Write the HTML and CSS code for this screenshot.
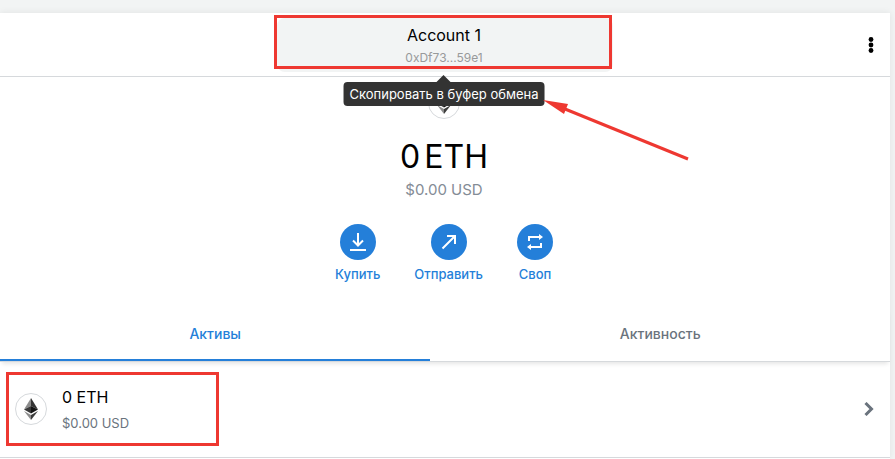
FILE: index.html
```html
<!DOCTYPE html>
<html lang="ru">

<head>
    <meta charset="UTF-8">
    <meta name="viewport" content="width=device-width, initial-scale=1.0">
    <title>Account 1</title>
    <link rel="stylesheet" href="styles.css">
</head>

<body>
    <svg class="symbols" aria-hidden="true">
        <symbol id="eth" viewBox="0 0 14 22">
            <path fill="#343434" d="M7 0v8L14 11.5z" />
            <path fill="#8c8c8c" d="M7 0v8L0 11.5z" />
            <path fill="#141414" d="M7 8v7.6l7-4.1z" />
            <path fill="#393939" d="M7 8v7.6l-7-4.1z" />
            <path fill="#3c3c3b" d="M7 17v5l7-9z" />
            <path fill="#8c8c8c" d="M7 17v5L0 13z" />
        </symbol>
    </svg>

    <main class="wallet">
        <header class="menu-bar">
            <div class="account-wrap">
                <button type="button" class="account" aria-describedby="copy-tip">
                    <span class="account-name">Account 1</span>
                    <span class="account-address">0xDf73...59e1</span>
                </button>
                <div class="tooltip" id="copy-tip" role="tooltip">Скопировать в буфер обмена</div>
                <div class="mark mark-account"></div>
                <svg class="mark-arrow" width="150" height="66" viewBox="0 0 150 66" aria-hidden="true">
                    <path d="M22 9l123 50" stroke="#ee3831" stroke-width="3" />
                    <path fill="#ee3831" d="M0 0l25 4-4 10z" />
                </svg>
            </div>
            <button type="button" class="options" aria-label="Параметры счета">
                <svg width="6" height="16" viewBox="0 0 6 16">
                    <circle cx="3" cy="2.5" r="2.4" />
                    <circle cx="3" cy="8" r="2.4" />
                    <circle cx="3" cy="13.5" r="2.4" />
                </svg>
            </button>
        </header>

        <section class="overview">
            <div class="token-icon"><svg width="14" height="22"><use href="#eth" /></svg></div>
            <h1 class="balance"><span>0</span> <span>ETH</span></h1>
            <p class="balance-fiat">$0.00 USD</p>
            <div class="actions">
                <button type="button" class="action">
                    <span class="action-circle">
                        <svg width="18" height="20" viewBox="0 0 18 20" fill="none" stroke="#fff" stroke-width="2">
                            <path d="M9 1v12M4 8.5l5 5 5-5M1 18h16" />
                        </svg>
                    </span>
                    Купить
                </button>
                <button type="button" class="action">
                    <span class="action-circle">
                        <svg width="16" height="16" viewBox="0 0 16 16" fill="none" stroke="#fff" stroke-width="2">
                            <path d="M1.5 14.5L14 2M6 2h8v8" />
                        </svg>
                    </span>
                    Отправить
                </button>
                <button type="button" class="action">
                    <span class="action-circle">
                        <svg width="18" height="18" viewBox="0 0 18 18">
                            <path fill="none" stroke="#fff" stroke-width="2" d="M3 8V4h11M15 10v4H4" />
                            <path fill="#fff" d="M13 1l4 3-4 3zM5 11l-4 3 4 3z" />
                        </svg>
                    </span>
                    Своп
                </button>
            </div>
        </section>

        <nav class="tabs">
            <button type="button" class="tab active">Активы</button>
            <button type="button" class="tab">Активность</button>
        </nav>

        <a href="#eth-asset" class="asset" id="eth-asset">
            <span class="token-icon"><svg width="14" height="22"><use href="#eth" /></svg></span>
            <span class="asset-text">
                <span class="asset-amount">0 ETH</span>
                <span class="asset-fiat">$0.00 USD</span>
            </span>
            <svg class="chevron" width="10" height="14" viewBox="0 0 10 14" fill="none" stroke="#6a737d" stroke-width="3">
                <path d="M1.5 1l6 6-6 6" />
            </svg>
            <span class="mark mark-asset"></span>
        </a>
    </main>
</body>

</html>
```

FILE: styles.css
```css
* {
    margin: 0;
    padding: 0;
    box-sizing: border-box;
}

:root {
    --blue: #247fd9;
    --grey: #6a737d;
    --line: #d6d9dc;
    --mark: #ee3831;
}

body {
    background: #f2f4f4;
    font-family: Inter, "Noto Sans", sans-serif;
    font-size: 13px;
    line-height: 18px;
    color: #000;
    padding: 13px 5px 0 0;
    overflow: hidden;
}

button {
    border: none;
    background: none;
    font: inherit;
    color: inherit;
    cursor: pointer;
}

.symbols {
    display: none;
}

.wallet {
    background: #fff;
    min-height: calc(100vh - 13px);
    box-shadow: 0 0 7px rgba(0, 0, 0, 0.08);
}

.menu-bar {
    display: grid;
    grid-template-columns: 1fr minmax(0, 336px) 1fr;
    align-items: center;
    height: 64px;
    border-bottom: 1px solid var(--line);
}

.account-wrap {
    position: relative;
    grid-column: 2;
}

.account {
    display: flex;
    flex-direction: column;
    align-items: center;
    gap: 4px;
    width: 100%;
    padding: 7px 10px 5px 8px;
    border-radius: 8px;
    background: #f2f4f4;
}

.account-name {
    font-size: 16px;
    line-height: 20px;
}

.account-address {
    font-size: 12px;
    color: #989a9b;
}

.tooltip {
    position: absolute;
    top: 100%;
    left: 50%;
    transform: translateX(-50%);
    margin: 10px 0 0 -1px;
    padding: 3px 6px;
    border-radius: 4px;
    background: #333;
    color: #fff;
    white-space: nowrap;
    z-index: 1;
}

.tooltip::before {
    content: "";
    position: absolute;
    bottom: 100%;
    left: 50%;
    margin-left: -7px;
    border: 7px solid transparent;
    border-top: none;
    border-bottom-color: #333;
}

.mark {
    position: absolute;
    border: 3px solid var(--mark);
    pointer-events: none;
}

.mark-account {
    inset: -3px 1px 3px -3px;
}

.mark-arrow {
    position: absolute;
    top: 82px;
    left: 266px;
    z-index: 2;
    fill: none;
}

.options {
    justify-self: end;
    display: flex;
    padding: 8px 16px;
}

.overview {
    display: flex;
    flex-direction: column;
    align-items: center;
    padding: 10px 18px 24px 16px;
}

.token-icon {
    display: flex;
    align-items: center;
    justify-content: center;
    flex: none;
    width: 32px;
    height: 32px;
    border: 1px solid var(--line);
    border-radius: 50%;
    background: #fff;
}

.balance {
    display: flex;
    gap: 4px;
    margin-top: 16px;
    font-size: 32px;
    font-weight: 400;
    line-height: 44px;
}

.balance-fiat {
    font-size: 15px;
    line-height: 22px;
    color: #848c96;
}

.actions {
    display: flex;
    gap: 34px;
    margin-top: 23px;
}

.action {
    display: flex;
    flex-direction: column;
    align-items: center;
    gap: 5px;
    color: var(--blue);
    font-weight: 500;
}

.action-circle {
    display: flex;
    align-items: center;
    justify-content: center;
    width: 36px;
    height: 36px;
    border-radius: 50%;
    background: var(--blue);
}

.tabs {
    display: flex;
    border-bottom: 1px solid var(--line);
    box-shadow: 0 4px 4px -2px rgba(0, 0, 0, 0.1);
}

.tab {
    flex: 1 1 auto;
    height: 54px;
    padding-top: 2px;
    border-bottom: 2px solid transparent;
    color: var(--grey);
    font-size: 14px;
    font-weight: 500;
}

.tab.active {
    border-color: var(--blue);
    color: var(--blue);
}

.asset {
    position: relative;
    display: flex;
    align-items: center;
    gap: 15px;
    padding: 23px 16px 24px 15px;
    border-bottom: 1px solid var(--line);
    color: #000;
    text-decoration: none;
}

.asset-text {
    display: flex;
    flex: 1;
    flex-direction: column;
    gap: 4px;
}

.asset-amount {
    font-size: 16px;
    line-height: 24px;
}

.asset-fiat {
    font-size: 13px;
    line-height: 20px;
    color: var(--grey);
}

.mark-asset {
    top: 10px;
    left: 6px;
    width: 213px;
    height: 74px;
}
```
